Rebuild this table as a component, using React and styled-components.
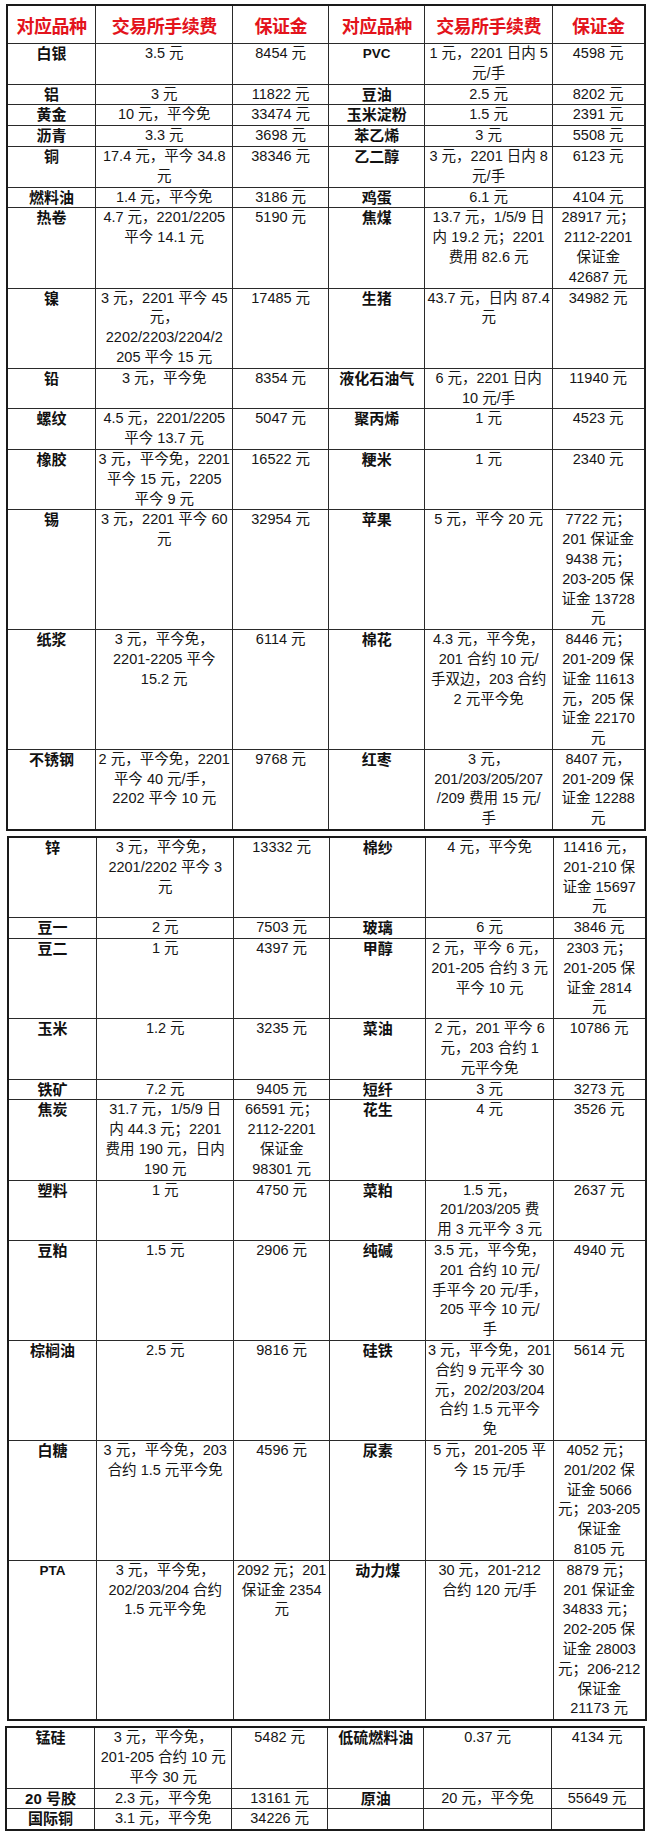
import React from "react";
import styled, { createGlobalStyle } from "styled-components";

const GlobalStyle = createGlobalStyle`
  html, body {
    margin: 0;
    padding: 0;
    background: #fff;
  }
  body {
    font-family: "Liberation Sans", "Noto Sans CJK SC", sans-serif;
    color: #111;
  }
`;

const Page = styled.div`
  width: 650px;
  height: 1838px;
  box-sizing: border-box;
  padding: 4px 0 0 6px;
  display: flex;
  flex-direction: column;
  gap: 5px;
  overflow: hidden;
`;

const Table = styled.table`
  width: 638px;
  table-layout: fixed;
  border-collapse: collapse;
  border: 2px solid #1a1a1a;
  margin-left: ${props => props.$shift || 0}px;
`;

const HeadCell = styled.th`
  height: 37px;
  padding: 0;
  border: 1px solid #2a2a2a;
  color: #e3141c;
  font-family: "Noto Sans CJK SC", sans-serif;
  font-size: 18px;
  font-weight: 700;
  letter-spacing: -0.5px;
  text-align: center;
  vertical-align: middle;
  white-space: nowrap;
`;

const NameCell = styled.td`
  padding: 0 2px;
  border: 1px solid #2a2a2a;
  font-family: "Liberation Sans", "Noto Sans CJK SC", sans-serif;
  font-size: ${props => (props.$latin ? "13.5px" : "15px")};
  font-weight: 700;
  line-height: 19.8px;
  text-align: center;
  vertical-align: top;
  white-space: nowrap;
`;

const Cell = styled.td`
  padding: 0 1px;
  border: 1px solid #2a2a2a;
  font-size: 14.5px;
  line-height: 19.8px;
  text-align: center;
  vertical-align: top;
  white-space: nowrap;
  color: #151515;
`;

const widths = [88.6, 137.3, 95.6, 96.5, 127.3, 92.3];

const head = ["对应品种", "交易所手续费", "保证金", "对应品种", "交易所手续费", "保证金"];

const table1 = [
  ["白银", ["3.5 元"], ["8454 元"], "PVC", ["1 元，2201 日内 5", "元/手"], ["4598 元"]],
  ["铝", ["3 元"], ["11822 元"], "豆油", ["2.5 元"], ["8202 元"]],
  ["黄金", ["10 元，平今免"], ["33474 元"], "玉米淀粉", ["1.5 元"], ["2391 元"]],
  ["沥青", ["3.3 元"], ["3698 元"], "苯乙烯", ["3 元"], ["5508 元"]],
  ["铜", ["17.4 元，平今 34.8", "元"], ["38346 元"], "乙二醇", ["3 元，2201 日内 8", "元/手"], ["6123 元"]],
  ["燃料油", ["1.4 元，平今免"], ["3186 元"], "鸡蛋", ["6.1 元"], ["4104 元"]],
  [
    "热卷",
    ["4.7 元，2201/2205", "平今 14.1 元"],
    ["5190 元"],
    "焦煤",
    ["13.7 元，1/5/9 日", "内 19.2 元；2201", "费用 82.6 元"],
    ["28917 元；", "2112-2201", "保证金", "42687 元"]
  ],
  [
    "镍",
    ["3 元，2201 平今 45", "元，", "2202/2203/2204/2", "205 平今 15 元"],
    ["17485 元"],
    "生猪",
    ["43.7 元，日内 87.4", "元"],
    ["34982 元"]
  ],
  ["铅", ["3 元，平今免"], ["8354 元"], "液化石油气", ["6 元，2201 日内", "10 元/手"], ["11940 元"]],
  ["螺纹", ["4.5 元，2201/2205", "平今 13.7 元"], ["5047 元"], "聚丙烯", ["1 元"], ["4523 元"]],
  ["橡胶", ["3 元，平今免，2201", "平今 15 元，2205", "平今 9 元"], ["16522 元"], "粳米", ["1 元"], ["2340 元"]],
  [
    "锡",
    ["3 元，2201 平今 60", "元"],
    ["32954 元"],
    "苹果",
    ["5 元，平今 20 元"],
    ["7722 元；", "201 保证金", "9438 元；", "203-205 保", "证金 13728", "元"]
  ],
  [
    "纸浆",
    ["3 元，平今免，", "2201-2205 平今", "15.2 元"],
    ["6114 元"],
    "棉花",
    ["4.3 元，平今免，", "201 合约 10 元/", "手双边，203 合约", "2 元平今免"],
    ["8446 元；", "201-209 保", "证金 11613", "元，205 保", "证金 22170", "元"]
  ],
  [
    "不锈钢",
    ["2 元，平今免，2201", "平今 40 元/手，", "2202 平今 10 元"],
    ["9768 元"],
    "红枣",
    ["3 元，", "201/203/205/207", "/209 费用 15 元/", "手"],
    ["8407 元，", "201-209 保", "证金 12288", "元"]
  ]
];

const table2 = [
  [
    "锌",
    ["3 元，平今免，", "2201/2202 平今 3", "元"],
    ["13332 元"],
    "棉纱",
    ["4 元，平今免"],
    ["11416 元，", "201-210 保", "证金 15697", "元"]
  ],
  ["豆一", ["2 元"], ["7503 元"], "玻璃", ["6 元"], ["3846 元"]],
  [
    "豆二",
    ["1 元"],
    ["4397 元"],
    "甲醇",
    ["2 元，平今 6 元，", "201-205 合约 3 元", "平今 10 元"],
    ["2303 元；", "201-205 保", "证金 2814", "元"]
  ],
  ["玉米", ["1.2 元"], ["3235 元"], "菜油", ["2 元，201 平今 6", "元，203 合约 1", "元平今免"], ["10786 元"]],
  ["铁矿", ["7.2 元"], ["9405 元"], "短纤", ["3 元"], ["3273 元"]],
  [
    "焦炭",
    ["31.7 元，1/5/9 日", "内 44.3 元；2201", "费用 190 元，日内", "190 元"],
    ["66591 元；", "2112-2201", "保证金", "98301 元"],
    "花生",
    ["4 元"],
    ["3526 元"]
  ],
  ["塑料", ["1 元"], ["4750 元"], "菜粕", ["1.5 元，", "201/203/205 费", "用 3 元平今 3 元"], ["2637 元"]],
  [
    "豆粕",
    ["1.5 元"],
    ["2906 元"],
    "纯碱",
    ["3.5 元，平今免，", "201 合约 10 元/", "手平今 20 元/手，", "205 平今 10 元/", "手"],
    ["4940 元"]
  ],
  [
    "棕榈油",
    ["2.5 元"],
    ["9816 元"],
    "硅铁",
    ["3 元，平今免，201", "合约 9 元平今 30", "元，202/203/204", "合约 1.5 元平今", "免"],
    ["5614 元"]
  ],
  [
    "白糖",
    ["3 元，平今免，203", "合约 1.5 元平今免"],
    ["4596 元"],
    "尿素",
    ["5 元，201-205 平", "今 15 元/手"],
    ["4052 元；", "201/202 保", "证金 5066", "元；203-205", "保证金", "8105 元"]
  ],
  [
    "PTA",
    ["3 元，平今免，", "202/203/204 合约", "1.5 元平今免"],
    ["2092 元；201", "保证金 2354", "元"],
    "动力煤",
    ["30 元，201-212", "合约 120 元/手"],
    ["8879 元；", "201 保证金", "34833 元；", "202-205 保", "证金 28003", "元；206-212", "保证金", "21173 元"]
  ]
];

const table3 = [
  ["锰硅", ["3 元，平今免，", "201-205 合约 10 元", "平今 30 元"], ["5482 元"], "低硫燃料油", ["0.37 元"], ["4134 元"]],
  ["20 号胶", ["2.3 元，平今免"], ["13161 元"], "原油", ["20 元，平今免"], ["55649 元"]],
  ["国际铜", ["3.1 元，平今免"], ["34226 元"], "", [], []]
];

function Lines({ items }) {
  return items.map((t, i) => (
    <React.Fragment key={i}>
      {i > 0 && <br />}
      {t}
    </React.Fragment>
  ));
}

const isLatin = name => /^[A-Z]+$/.test(name);

function RateRow({ row }) {
  const [n1, f1, m1, n2, f2, m2] = row;
  return (
    <tr>
      <NameCell $latin={isLatin(n1)}>{n1}</NameCell>
      <Cell>
        <Lines items={f1} />
      </Cell>
      <Cell>
        <Lines items={m1} />
      </Cell>
      <NameCell $latin={isLatin(n2)}>{n2}</NameCell>
      <Cell>
        <Lines items={f2} />
      </Cell>
      <Cell>
        <Lines items={m2} />
      </Cell>
    </tr>
  );
}

function RateTable({ rows, withHead, shift }) {
  return (
    <Table $shift={shift}>
      <colgroup>
        {widths.map((w, i) => (
          <col key={i} style={{ width: w }} />
        ))}
      </colgroup>
      <tbody>
        {withHead && (
          <tr>
            {head.map((h, i) => (
              <HeadCell key={i}>{h}</HeadCell>
            ))}
          </tr>
        )}
        {rows.map((r, i) => (
          <RateRow key={i} row={r} />
        ))}
      </tbody>
    </Table>
  );
}

export default function App() {
  return (
    <>
      <GlobalStyle />
      <Page>
        <RateTable rows={table1} withHead />
        <RateTable rows={table2} shift={1} />
        <RateTable rows={table3} shift={-1} />
      </Page>
    </>
  );
}
